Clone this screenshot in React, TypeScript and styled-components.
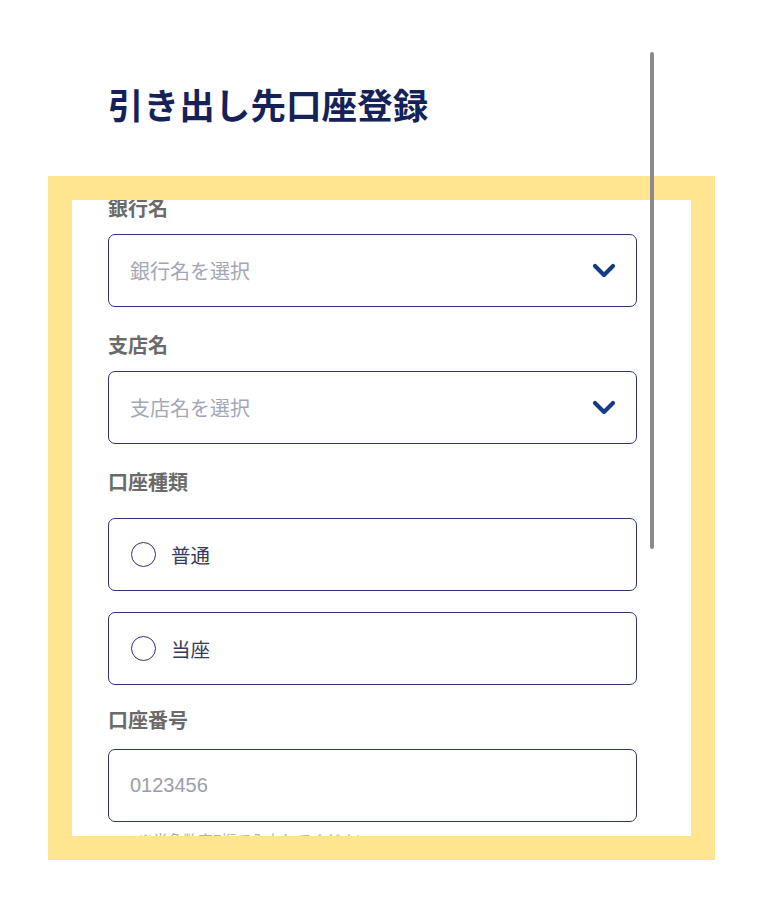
import React from "react";
import styled, { createGlobalStyle } from "styled-components";

const GlobalStyle = createGlobalStyle`
  html, body {
    margin: 0;
    padding: 0;
    background: #ffffff;
  }
  body {
    font-family: "Noto Sans CJK JP", "Noto Sans", sans-serif;
  }
  * { box-sizing: border-box; }
`;

const Page = styled.div`
  position: relative;
  width: 776px;
  height: 916px;
  overflow: hidden;
  background: #ffffff;
`;

const Scroller = styled.div`
  height: 860px;
  overflow: hidden;
  padding: 78px 0 0 108px;
`;

const Column = styled.div`
  width: 529px;
  display: flex;
  flex-direction: column;
`;

const Title = styled.h1`
  margin: 0 0 68px 0;
  font-size: 35.5px;
  line-height: 52px;
  font-weight: 700;
  color: #15225a;
  letter-spacing: 0.1px;
`;

const Field = styled.div<{ $after: number }>`
  display: flex;
  flex-direction: column;
  margin-bottom: ${(p) => p.$after}px;
`;

const Label = styled.div<{ $space: number }>`
  font-size: 20px;
  line-height: 19px;
  font-weight: 700;
  color: #6a6a6a;
  margin-bottom: ${(p) => p.$space}px;
`;

const Box = styled.div`
  height: 73px;
  border: 1.8px solid #2b3572;
  border-radius: 7px;
  background: #ffffff;
  display: flex;
  align-items: center;
  padding: 0 20px 0 21px;
`;

const Placeholder = styled.span`
  flex: 1;
  font-size: 20px;
  color: #a3a7b5;
`;

const NumberText = styled.span`
  flex: 1;
  font-family: "Liberation Sans", Arial, sans-serif;
  font-size: 20px;
  color: #9a9eab;
`;

const RadioGroup = styled.div`
  display: flex;
  flex-direction: column;
  gap: 21px;
`;

const RadioBox = styled(Box)`
  padding-left: 22px;
  gap: 15px;
`;

const Circle = styled.span`
  width: 25px;
  height: 25px;
  border-radius: 50%;
  border: 1.6px solid #2b3572;
  flex-shrink: 0;
`;

const RadioText = styled.span`
  font-size: 19.5px;
  color: #343a58;
`;

const Helper = styled.div`
  margin-top: 8px;
  padding-left: 30px;
  font-size: 15px;
  line-height: 20px;
  color: #b0b0b0;
`;

const Frame = styled.div`
  position: absolute;
  left: 48px;
  top: 176px;
  width: 667px;
  height: 684px;
  border: 24px solid #ffe58f;
  pointer-events: none;
`;

const Thumb = styled.div`
  position: absolute;
  left: 650px;
  top: 52px;
  width: 4px;
  height: 497px;
  border-radius: 2px;
  background: #8a8a8a;
`;

const Chevron = () => (
  <svg width="24" height="16" viewBox="0 0 24 16">
    <polyline
      points="3,3 12,12 21,3"
      fill="none"
      stroke="#173a86"
      strokeWidth="4.2"
      strokeLinecap="round"
      strokeLinejoin="round"
    />
  </svg>
);

export default function App() {
  return (
    <>
      <GlobalStyle />
      <Page>
        <Scroller>
          <Column>
            <Title>引き出し先口座登録</Title>
            <Field $after={28}>
              <Label $space={17}>銀行名</Label>
              <Box>
                <Placeholder>銀行名を選択</Placeholder>
                <Chevron />
              </Box>
            </Field>
            <Field $after={28}>
              <Label $space={17}>支店名</Label>
              <Box>
                <Placeholder>支店名を選択</Placeholder>
                <Chevron />
              </Box>
            </Field>
            <Field $after={25}>
              <Label $space={27}>口座種類</Label>
              <RadioGroup>
                <RadioBox>
                  <Circle />
                  <RadioText>普通</RadioText>
                </RadioBox>
                <RadioBox>
                  <Circle />
                  <RadioText>当座</RadioText>
                </RadioBox>
              </RadioGroup>
            </Field>
            <Field $after={0}>
              <Label $space={20}>口座番号</Label>
              <Box>
                <NumberText>0123456</NumberText>
              </Box>
              <Helper>※半角数字7桁で入力してください</Helper>
            </Field>
          </Column>
        </Scroller>
        <Frame />
        <Thumb />
      </Page>
    </>
  );
}
